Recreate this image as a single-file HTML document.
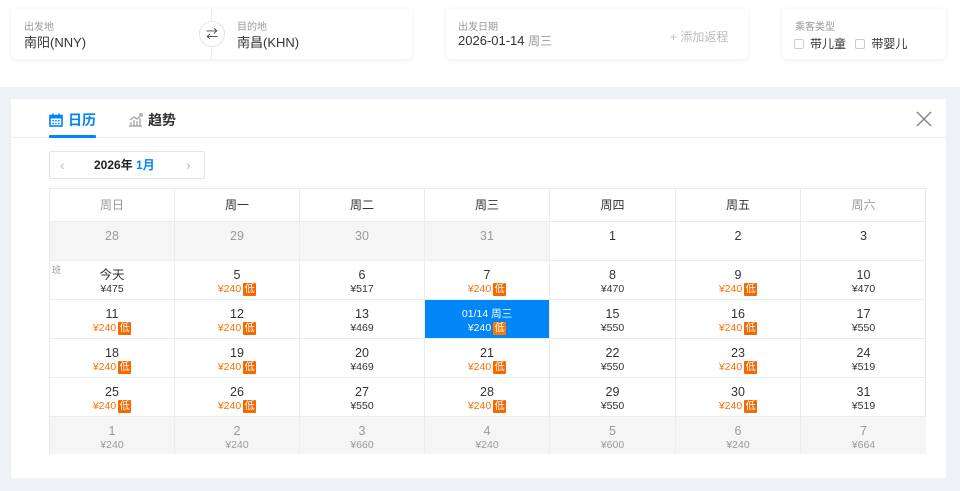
<!DOCTYPE html>
<html><head><meta charset="utf-8"><style>
*{margin:0;padding:0;box-sizing:border-box}
body{width:960px;height:491px;background:#fff;font-family:"Liberation Sans","Noto Sans CJK SC",sans-serif;position:relative;overflow:hidden;color:#333}
.card{position:absolute;top:9px;height:50px;background:#fff;border-radius:4px;box-shadow:0 1px 5px rgba(0,0,0,.08)}
.lbl{position:absolute;font-size:10px;color:#999;top:9px}
.val{position:absolute;font-size:13px;color:#333;top:23px}
.gray{position:absolute;left:0;top:87px;width:960px;height:404px;background:#eef1f6}
.panel{position:absolute;left:11px;top:99px;width:935px;height:379px;background:#fff}
.grid{position:absolute;left:49px;top:188px;width:877px;height:266px;border:1px solid #e8e8e8}
.c{position:absolute;border-right:1px solid #ececec;border-bottom:1px solid #ececec;text-align:center;font-size:12.5px;height:39px;padding-top:7px}
.c .n{line-height:14px;height:15px}
.c .p{font-size:10.5px;line-height:13px;height:13px;color:#333}
.o{color:#ff6d00!important}
.b{display:inline-block;background:#f56a00;color:#fff;font-size:10px;line-height:13px;width:13px;height:13px;border-radius:1px;vertical-align:top;margin-left:2px}
.past{background:#f5f5f5;color:#999}
.past .p{color:#999}
.h{position:absolute;top:0;height:33px;line-height:33px;text-align:center;font-size:12px;font-weight:normal;border-right:1px solid #ececec;border-bottom:1px solid #ececec}
.sel{background:#0086f6;color:#fff}
.sel .p{color:#fff}
.sel .b{background:#ff7a00}
</style></head><body>
<div class="card" style="left:11px;width:401px">
 <div class="lbl" style="left:13px">出发地</div><div class="val" style="left:13px">南阳(NNY)</div>
 <div style="position:absolute;left:200px;top:0;width:1px;height:50px;background:#eee"></div>
 <div style="position:absolute;left:188px;top:12px;width:26px;height:26px;border-radius:50%;border:1px solid #e4e4e4;background:#fff;text-align:center;line-height:24px;font-size:12px;color:#444">⇄</div>
 <div class="lbl" style="left:226px">目的地</div><div class="val" style="left:226px">南昌(KHN)</div>
</div>
<div class="card" style="left:446px;width:302px">
 <div class="lbl" style="left:12px">出发日期</div><div class="val" style="left:12px">2026-01-14 <span style="color:#999;font-size:12px">周三</span></div>
 <div style="position:absolute;left:224px;top:19px;font-size:12px;color:#bbb">+ 添加返程</div>
</div>
<div class="card" style="left:782px;width:164px">
 <div class="lbl" style="left:13px">乘客类型</div>
 <div class="val" style="left:12px;font-size:12px;top:26px"><span style="display:inline-block;width:10px;height:10px;border:1px solid #ccc;border-radius:2px;vertical-align:-1px;margin-right:6px"></span>带儿童 <span style="display:inline-block;width:10px;height:10px;border:1px solid #ccc;border-radius:2px;vertical-align:-1px;margin:0 6px 0 6px"></span>带婴儿</div>
</div>
<div class="gray"></div>
<div class="panel">
 <div style="position:absolute;left:0;top:38px;width:935px;height:1px;background:#eee"></div>
 <div style="position:absolute;left:38px;top:11px;font-size:14px;font-weight:bold;color:#0086f6">
  <svg width="14" height="14" viewBox="0 0 14 14" style="vertical-align:-2px;margin-right:5px"><rect x="1" y="2.5" width="12" height="10.5" fill="none" stroke="#0086f6" stroke-width="1.6"/><rect x="1" y="2.5" width="12" height="3" fill="#0086f6"/><path d="M4 0.5v3M10 0.5v3" stroke="#0086f6" stroke-width="1.5"/><g fill="#0086f6"><rect x="3.5" y="7" width="1.5" height="1.5"/><rect x="6.2" y="7" width="1.5" height="1.5"/><rect x="9" y="7" width="1.5" height="1.5"/><rect x="3.5" y="9.7" width="1.5" height="1.5"/><rect x="6.2" y="9.7" width="1.5" height="1.5"/><rect x="9" y="9.7" width="1.5" height="1.5"/></g></svg>日历</div>
 <div style="position:absolute;left:38px;top:36px;width:47px;height:3px;background:#0086f6;border-radius:1px"></div>
 <div style="position:absolute;left:117px;top:11px;font-size:14px;font-weight:bold;color:#333">
  <svg width="15" height="14" viewBox="0 0 15 14" style="vertical-align:-2px;margin-right:5px"><path d="M1 13h13M3 13V9M6 13V7M9 13V8M12 13V5M2 7l4-3 3 2 5-5M11 1h3v3" fill="none" stroke="#aaa" stroke-width="1.4"/></svg>趋势</div>
 <svg width="16" height="16" viewBox="0 0 16 16" style="position:absolute;left:905px;top:12px"><path d="M1 1L15 15M15 1L1 15" stroke="#888" stroke-width="1.5"/></svg>
 <div style="position:absolute;left:38px;top:52px;width:156px;height:28px;border:1px solid #e4e4e4;border-radius:2px;font-size:12px;line-height:26px">
  <span style="position:absolute;left:10px;color:#bbb;font-size:14px">‹</span>
  <span style="position:absolute;left:44px;font-weight:bold;color:#222">2026年 <span style="color:#0086f6">1月</span></span>
  <span style="position:absolute;left:136px;color:#bbb;font-size:14px">›</span>
 </div>
</div>
<div class="grid">
 <div class="h" style="left:0;width:125px;color:#999">周日</div>
 <div class="h" style="left:125px;width:125px">周一</div>
 <div class="h" style="left:250px;width:125px">周二</div>
 <div class="h" style="left:375px;width:125px">周三</div>
 <div class="h" style="left:500px;width:126px">周四</div>
 <div class="h" style="left:626px;width:125px">周五</div>
 <div class="h" style="left:751px;width:125px;color:#999;border-right:none">周六</div>

 <div class="c past" style="left:0;top:33px;width:125px"><div class="n">28</div></div>
 <div class="c past" style="left:125px;top:33px;width:125px"><div class="n">29</div></div>
 <div class="c past" style="left:250px;top:33px;width:125px"><div class="n">30</div></div>
 <div class="c past" style="left:375px;top:33px;width:125px"><div class="n">31</div></div>
 <div class="c" style="left:500px;top:33px;width:126px"><div class="n">1</div></div>
 <div class="c" style="left:626px;top:33px;width:125px"><div class="n">2</div></div>
 <div class="c" style="left:751px;top:33px;width:125px;border-right:none"><div class="n">3</div></div>

 <div class="c" style="left:0;top:72px;width:125px"><span style="position:absolute;left:2px;top:2px;font-size:9px;color:#999">班</span><div class="n">今天</div><div class="p">¥475</div></div>
 <div class="c" style="left:125px;top:72px;width:125px"><div class="n">5</div><div class="p o">¥240<span class="b">低</span></div></div>
 <div class="c" style="left:250px;top:72px;width:125px"><div class="n">6</div><div class="p">¥517</div></div>
 <div class="c" style="left:375px;top:72px;width:125px"><div class="n">7</div><div class="p o">¥240<span class="b">低</span></div></div>
 <div class="c" style="left:500px;top:72px;width:126px"><div class="n">8</div><div class="p">¥470</div></div>
 <div class="c" style="left:626px;top:72px;width:125px"><div class="n">9</div><div class="p o">¥240<span class="b">低</span></div></div>
 <div class="c" style="left:751px;top:72px;width:125px;border-right:none"><div class="n">10</div><div class="p">¥470</div></div>

 <div class="c" style="left:0;top:111px;width:125px"><div class="n">11</div><div class="p o">¥240<span class="b">低</span></div></div>
 <div class="c" style="left:125px;top:111px;width:125px"><div class="n">12</div><div class="p o">¥240<span class="b">低</span></div></div>
 <div class="c" style="left:250px;top:111px;width:125px"><div class="n">13</div><div class="p">¥469</div></div>
 <div class="c sel" style="left:375px;top:111px;width:125px"><div class="n" style="font-size:10.5px">01/14 周三</div><div class="p">¥240<span class="b">低</span></div></div>
 <div class="c" style="left:500px;top:111px;width:126px"><div class="n">15</div><div class="p">¥550</div></div>
 <div class="c" style="left:626px;top:111px;width:125px"><div class="n">16</div><div class="p o">¥240<span class="b">低</span></div></div>
 <div class="c" style="left:751px;top:111px;width:125px;border-right:none"><div class="n">17</div><div class="p">¥550</div></div>

 <div class="c" style="left:0;top:150px;width:125px"><div class="n">18</div><div class="p o">¥240<span class="b">低</span></div></div>
 <div class="c" style="left:125px;top:150px;width:125px"><div class="n">19</div><div class="p o">¥240<span class="b">低</span></div></div>
 <div class="c" style="left:250px;top:150px;width:125px"><div class="n">20</div><div class="p">¥469</div></div>
 <div class="c" style="left:375px;top:150px;width:125px"><div class="n">21</div><div class="p o">¥240<span class="b">低</span></div></div>
 <div class="c" style="left:500px;top:150px;width:126px"><div class="n">22</div><div class="p">¥550</div></div>
 <div class="c" style="left:626px;top:150px;width:125px"><div class="n">23</div><div class="p o">¥240<span class="b">低</span></div></div>
 <div class="c" style="left:751px;top:150px;width:125px;border-right:none"><div class="n">24</div><div class="p">¥519</div></div>

 <div class="c" style="left:0;top:189px;width:125px"><div class="n">25</div><div class="p o">¥240<span class="b">低</span></div></div>
 <div class="c" style="left:125px;top:189px;width:125px"><div class="n">26</div><div class="p o">¥240<span class="b">低</span></div></div>
 <div class="c" style="left:250px;top:189px;width:125px"><div class="n">27</div><div class="p">¥550</div></div>
 <div class="c" style="left:375px;top:189px;width:125px"><div class="n">28</div><div class="p o">¥240<span class="b">低</span></div></div>
 <div class="c" style="left:500px;top:189px;width:126px"><div class="n">29</div><div class="p">¥550</div></div>
 <div class="c" style="left:626px;top:189px;width:125px"><div class="n">30</div><div class="p o">¥240<span class="b">低</span></div></div>
 <div class="c" style="left:751px;top:189px;width:125px;border-right:none"><div class="n">31</div><div class="p">¥519</div></div>

 <div class="c past" style="left:0;top:228px;width:125px;height:37px;border-bottom:none"><div class="n">1</div><div class="p">¥240</div></div>
 <div class="c past" style="left:125px;top:228px;width:125px;height:37px;border-bottom:none"><div class="n">2</div><div class="p">¥240</div></div>
 <div class="c past" style="left:250px;top:228px;width:125px;height:37px;border-bottom:none"><div class="n">3</div><div class="p">¥660</div></div>
 <div class="c past" style="left:375px;top:228px;width:125px;height:37px;border-bottom:none"><div class="n">4</div><div class="p">¥240</div></div>
 <div class="c past" style="left:500px;top:228px;width:126px;height:37px;border-bottom:none"><div class="n">5</div><div class="p">¥600</div></div>
 <div class="c past" style="left:626px;top:228px;width:125px;height:37px;border-bottom:none"><div class="n">6</div><div class="p">¥240</div></div>
 <div class="c past" style="left:751px;top:228px;width:125px;height:37px;border:none"><div class="n">7</div><div class="p">¥664</div></div>
</div>
</body></html>
